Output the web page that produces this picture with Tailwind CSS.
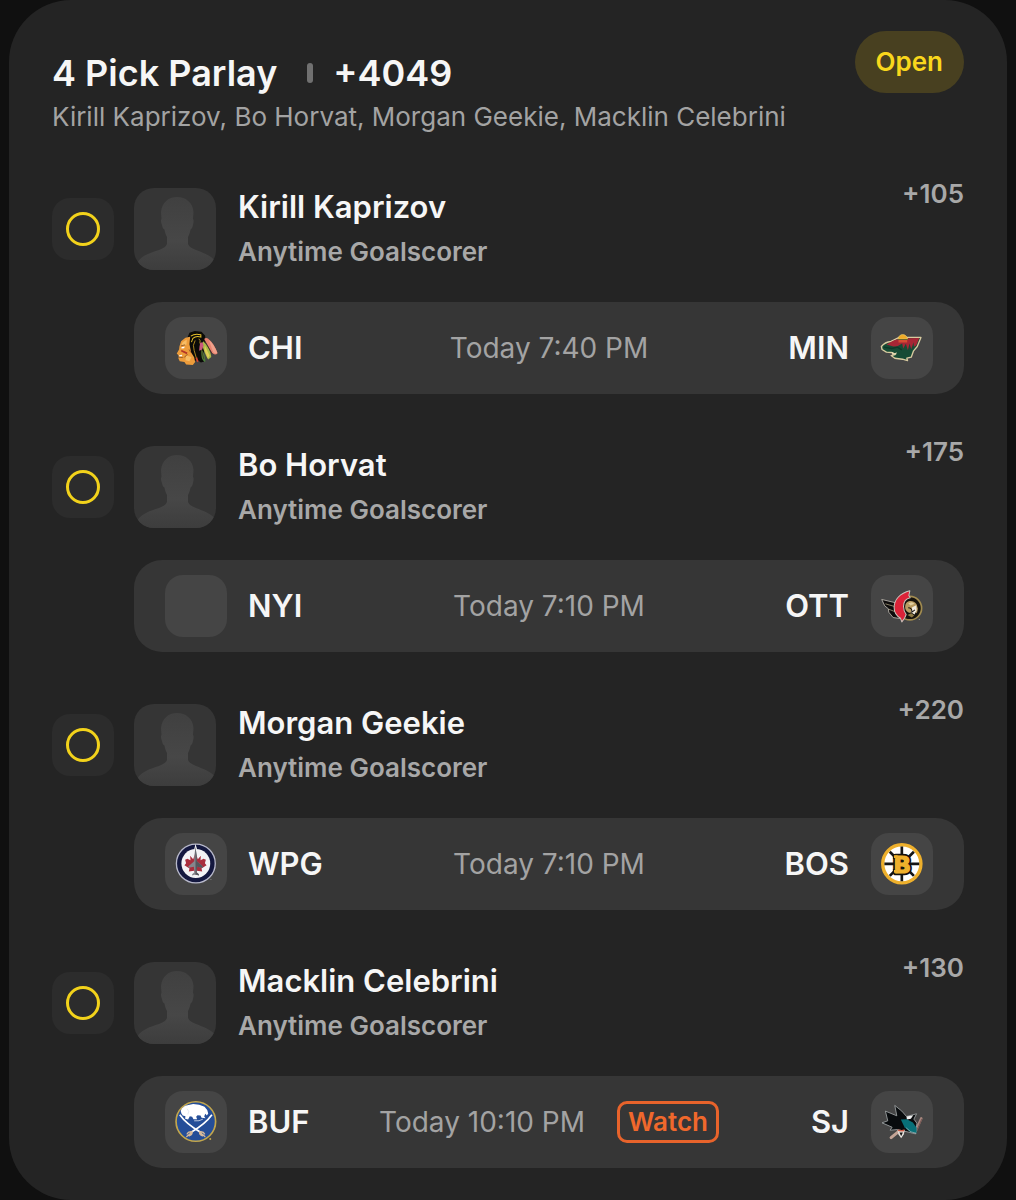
<!DOCTYPE html>
<html lang="en">
<head>
    <meta charset="UTF-8">
    <meta name="viewport" content="width=device-width, initial-scale=1.0">
    <title>4 Pick Parlay</title>
    <script src="https://cdn.jsdelivr.net/npm/@tailwindcss/browser@4"></script>
</head>
<body class="bg-[#101010] font-['Inter',sans-serif] text-[#f6f6f6]">
    <!-- shared shapes -->
    <svg class="absolute size-0" aria-hidden="true">
        <defs>
            <linearGradient id="avatarFill" x1="0" y1="0" x2="0" y2="1">
                <stop offset="0" stop-color="#404040"/>
                <stop offset="0.6" stop-color="#474747"/>
                <stop offset="1" stop-color="#3d3d3d"/>
            </linearGradient>
        </defs>
        <symbol id="avatar" viewBox="0 0 82 82">
            <path fill="url(#avatarFill)" d="M43 9c-9 0-15 6-16 15l.5 7c-1 1-.5 4 .5 6 .5 3 1.500 4 2.500 4.500C31 45 32 47 33 49v7c-1 3-4 4-8 6C16 65 8 67 3 75v7h79v-8c-5-7-13-9-20-12-4-2-7-3-8-6v-7c1-2 2-4 2.500-7.500 1-.5 2-2 2.500-4.500.5-2 1-5 0-6l.5-7C59 15 52 9 43 9z"/>
        </symbol>
    </svg>

    <main class="mx-[9px] rounded-[62px] bg-[#242424] px-[43px] pt-[31px] pb-8">
        <header class="flex items-start justify-between">
            <div class="pt-5">
                <h1 class="flex items-center text-4xl leading-[44px] font-semibold">
                    4 Pick Parlay
                    <span class="mr-5 ml-[30px] h-5 w-[6px] rounded-sm bg-[#707070]"></span>
                    +4049
                </h1>
                <p class="text-[26px] leading-[44px] text-[#a3a3a3]">Kirill Kaprizov, Bo Horvat, Morgan Geekie, Macklin Celebrini</p>
            </div>
            <span class="rounded-full bg-[#484020] px-[21px] text-[26px] leading-[62px] font-semibold text-[#f9d71c]">Open</span>
        </header>

        <ul class="mt-[39px] flex flex-col gap-[42px]">
            <li>
                <div class="flex items-start">
                    <div class="flex flex-1 items-center pt-[10px]">
                        <span class="grid size-[62px] place-items-center rounded-[18px] bg-[#2c2c2c]" role="img" aria-label="Pending">
                            <span class="size-[34px] rounded-full border-3 border-[#f2d21b]"></span>
                        </span>
                        <svg class="ml-5 size-[82px] rounded-[20px] bg-[#353535]" aria-hidden="true"><use href="#avatar"/></svg>
                        <div class="ml-[22px] flex flex-col gap-[9px]">
                            <h2 class="text-[31px] leading-9 font-semibold">Kirill Kaprizov</h2>
                            <p class="text-[26px] leading-9 font-semibold text-[#a8a8a8]">Anytime Goalscorer</p>
                        </div>
                    </div>
                    <span class="text-[26px] leading-8 font-semibold text-[#a8a8a8]">+105</span>
                </div>
                <div class="mt-8 ml-[82px] flex h-[92px] items-center rounded-[28px] bg-[#363636] px-[31px]">
                    <div class="flex flex-1 items-center gap-[21px]">
                        <svg class="size-[62px] rounded-[18px] bg-[#454545]" viewBox="15 21 185 185" aria-hidden="true">
                            <path fill="#0b0b08" d="M82 82l6-14 16-5 20 2 11 12 0 24-6 36 3 17-10 3-10-8-12 4-10-28z"/>
                            <path fill="#ed9c3b" d="M90 80l-14 3-13 10-5 16-1 9-7 12 5 5 1 5-1 5 4 8 14 2 5 8 20 1 7-9-3-14-9-14-5-25z"/>
                            <path fill="#f7bd66" d="M80 88l-13 9-3 10 15-3zM78 136l16 4-6 13-12-3z"/>
                            <path fill="#fff" d="M64 111l10-2-2 5-8 1zM57 135l9-1v4l-8 1z"/>
                            <path fill="#b53627" d="M64 119l18 8-2 5-17-8z"/>
                            <path fill="none" stroke="#6b3b1a" stroke-width="2" d="M63 107l12-3M82 132l-10 10M57 141l11 1M87 118l5 9"/>
                            <path fill="none" stroke="#e7c12c" stroke-width="3" d="M92 78q12-9 30-4l0 7q-14-5-24 4l-4 11"/>
                            <path fill="none" stroke="#c79a24" stroke-width="2.500" d="M105 91q-9 14-3 30l7 24M116 86q6 4 3 14"/>
                            <path fill="#e8826f" d="M132 87c3-4 8-4 12-1 12 9 21 24 28 43-6 6-13 4-18-3z"/>
                            <path fill="#f0a18b" d="M146 90c11 9 20 24 25 38-5 4-10 2-13-3z"/>
                            <path fill="#a9bb46" d="M129 93c12 10 23 33 24 47l-9 8c-8-12-15-32-19-46z"/>
                            <path fill="#e0cd58" d="M134 106l14 30-5 9-10-24z"/>
                            <path fill="#4b813b" d="M122 116c9 9 14 26 13 40-6-3-10-10-11-19z"/>
                            <path fill="#c9587b" d="M120 98l7-2 3 10-4 12-9 4 1-13z"/>
                            <path fill="none" stroke="#49251b" stroke-width="2" d="M131 89l25 42M124 120l7 27"/>
                            <path fill="#d5442f" d="M106 144l5-3 4 12-4 3z"/>
                        </svg>
                        <span class="text-[31px] leading-9 font-semibold">CHI</span>
                    </div>
                    <time class="text-[28px] leading-9 text-[#a3a3a3]">Today 7:40 PM</time>
                    <div class="flex flex-1 items-center justify-end gap-[22px]">
                        <span class="text-[31px] leading-9 font-semibold">MIN</span>
                        <svg class="size-[62px] rounded-[18px] bg-[#454545]" viewBox="275 21 185 185" aria-hidden="true">
                            <path fill="#174b35" stroke="#d8cba0" stroke-width="4" stroke-linejoin="round" d="M306 109c7-9 17-14 29-15l24-12 65 0-11 27-11 13-7 19-13 3 2 7-15-4-23-3-11-8 12-3-11-6-15-1-13-8z"/>
                            <path fill="#a72635" d="M321 103l20-11 18-7 60-1-9 22-7 4-1-14-7 21-5-17-5 20-6-19-8 14-3-15-14 8-12 1z"/>
                            <path fill="none" stroke="#0e3929" stroke-width="4" d="M313 111l24 4 17-4 13 8"/>
                            <path fill="#e3d8b1" d="M337 125l9 4 6-3-2 7-12 1z"/>
                            <path fill="#d64c32" d="M357 90h26v7h-26z"/>
                            <path fill="#efaa27" stroke="#e7ca6f" stroke-width="2" d="M356 87c1-18 26-18 28 0z"/>
                            <path fill="none" stroke="#6b632b" stroke-width="3" d="M355 88h30"/>
                        </svg>
                    </div>
                </div>
            </li>

            <li>
                <div class="flex items-start">
                    <div class="flex flex-1 items-center pt-[10px]">
                        <span class="grid size-[62px] place-items-center rounded-[18px] bg-[#2c2c2c]" role="img" aria-label="Pending">
                            <span class="size-[34px] rounded-full border-3 border-[#f2d21b]"></span>
                        </span>
                        <svg class="ml-5 size-[82px] rounded-[20px] bg-[#353535]" aria-hidden="true"><use href="#avatar"/></svg>
                        <div class="ml-[22px] flex flex-col gap-[9px]">
                            <h2 class="text-[31px] leading-9 font-semibold">Bo Horvat</h2>
                            <p class="text-[26px] leading-9 font-semibold text-[#a8a8a8]">Anytime Goalscorer</p>
                        </div>
                    </div>
                    <span class="text-[26px] leading-8 font-semibold text-[#a8a8a8]">+175</span>
                </div>
                <div class="mt-8 ml-[82px] flex h-[92px] items-center rounded-[28px] bg-[#363636] px-[31px]">
                    <div class="flex flex-1 items-center gap-[21px]">
                        <span class="size-[62px] rounded-[18px] bg-[#454545]"></span>
                        <span class="text-[31px] leading-9 font-semibold">NYI</span>
                    </div>
                    <time class="text-[28px] leading-9 text-[#a3a3a3]">Today 7:10 PM</time>
                    <div class="flex flex-1 items-center justify-end gap-[22px]">
                        <span class="text-[31px] leading-9 font-semibold">OTT</span>
                        <svg class="size-[62px] rounded-[18px] bg-[#454545]" viewBox="35 15 185 185" aria-hidden="true">
                            <circle cx="151" cy="114" r="35" fill="#17130d" stroke="#a18b50" stroke-width="5"/>
                            <path fill="#0d0b0b" stroke="#bdb8b0" stroke-width="2.500" stroke-linejoin="round" d="M67 88l42 10 2 32 12 15-22-3-13-16-1-10-11-9z"/>
                            <path fill="none" stroke="#c6b891" stroke-width="2" d="M78 101l27 8M88 117l20 8"/>
                            <path fill="#dc2338" stroke="#cbc5bd" stroke-width="3" stroke-linejoin="round" d="M151 62l-3 14 4 7c-14 3-20 13-20 26 0 10 3 17 8 24l-5 11-8 11-4-11c-12-7-19-18-19-32 0-24 18-43 47-50z"/>
                            <path fill="#b99c61" d="M137 108c1-17 23-21 34-6l4 14-3 13-13-11-6 10c-11-1-17-10-16-20z"/>
                            <path fill="#e0cea1" d="M146 99l11-3 8 5-12 5z"/>
                            <path fill="#f1ebe0" d="M158 111l12-6 1 16-6 12-11-7z"/>
                            <path fill="none" stroke="#1c1511" stroke-width="3" d="M146 113q12 0 11 13l9-7"/>
                            <path fill="#8e7a45" d="M144 134l11-5 9 7-7 6z"/>
                            <circle cx="179" cy="148" r="1.500" fill="#aaa"/>
                        </svg>
                    </div>
                </div>
            </li>

            <li>
                <div class="flex items-start">
                    <div class="flex flex-1 items-center pt-[10px]">
                        <span class="grid size-[62px] place-items-center rounded-[18px] bg-[#2c2c2c]" role="img" aria-label="Pending">
                            <span class="size-[34px] rounded-full border-3 border-[#f2d21b]"></span>
                        </span>
                        <svg class="ml-5 size-[82px] rounded-[20px] bg-[#353535]" aria-hidden="true"><use href="#avatar"/></svg>
                        <div class="ml-[22px] flex flex-col gap-[9px]">
                            <h2 class="text-[31px] leading-9 font-semibold">Morgan Geekie</h2>
                            <p class="text-[26px] leading-9 font-semibold text-[#a8a8a8]">Anytime Goalscorer</p>
                        </div>
                    </div>
                    <span class="text-[26px] leading-8 font-semibold text-[#a8a8a8]">+220</span>
                </div>
                <div class="mt-8 ml-[82px] flex h-[92px] items-center rounded-[28px] bg-[#363636] px-[31px]">
                    <div class="flex flex-1 items-center gap-[21px]">
                        <svg class="size-[62px] rounded-[18px] bg-[#454545]" viewBox="17 23 185 185" aria-hidden="true">
                            <circle cx="109" cy="114" r="58" fill="#14183f" stroke="#b7b8ca" stroke-width="4"/>
                            <circle cx="109" cy="114" r="43" fill="#f3f3f5"/>
                            <path fill="#f3f3f5" d="M104 72l4-17 5 17z"/>
                            <path fill="#a92e3d" d="M108 82l7 19 9-10-1 13 9-4 7 3-3 10 5 6-15 10 2 9-16-2-4 13-4-13-16 2 2-9-15-10 5-6-3-10 7-3 9 4-1-13 9 10z"/>
                            <path fill="#85868c" d="M108 64l3 23 1 20 17 15v5l-16-3-2 16 7 6v4l-10-3-10 3v-4l7-6-2-16-16 3v-5l17-15 1-20z"/>
                            <path fill="#55565c" d="M108 64l3 23 1 20 17 15v5l-16-3-2 16 7 6v4l-10-3z"/>
                            <circle cx="154" cy="162" r="1.500" fill="#999"/>
                        </svg>
                        <span class="text-[31px] leading-9 font-semibold">WPG</span>
                    </div>
                    <time class="text-[28px] leading-9 text-[#a3a3a3]">Today 7:10 PM</time>
                    <div class="flex flex-1 items-center justify-end gap-[22px]">
                        <span class="text-[31px] leading-9 font-semibold">BOS</span>
                        <svg class="size-[62px] rounded-[18px] bg-[#454545]" viewBox="35 23 185 185" aria-hidden="true">
                            <circle cx="127" cy="115" r="57" fill="#fff" stroke="#eeb02c" stroke-width="10"/>
                            <path stroke="#151515" stroke-width="8" d="M127 63v104M75 115h104M91 79l72 72M163 79l-72 72"/>
                            <text x="128" y="141" text-anchor="middle" font-family="DejaVu Sans" font-weight="700" font-size="70" fill="#eeb02c" stroke="#15120d" stroke-width="14" stroke-linejoin="round" paint-order="stroke">B</text>
                            <path fill="#eeb02c" stroke="#15120d" stroke-width="3" d="M102 88h14v11h-14zM102 132h14v11h-14z"/>
                            <text x="128" y="141" text-anchor="middle" font-family="DejaVu Sans" font-weight="700" font-size="70" fill="#eeb02c" stroke="#eeb02c" stroke-width="3">B</text>
                        </svg>
                    </div>
                </div>
            </li>

            <li>
                <div class="flex items-start">
                    <div class="flex flex-1 items-center pt-[10px]">
                        <span class="grid size-[62px] place-items-center rounded-[18px] bg-[#2c2c2c]" role="img" aria-label="Pending">
                            <span class="size-[34px] rounded-full border-3 border-[#f2d21b]"></span>
                        </span>
                        <svg class="ml-5 size-[82px] rounded-[20px] bg-[#353535]" aria-hidden="true"><use href="#avatar"/></svg>
                        <div class="ml-[22px] flex flex-col gap-[9px]">
                            <h2 class="text-[31px] leading-9 font-semibold">Macklin Celebrini</h2>
                            <p class="text-[26px] leading-9 font-semibold text-[#a8a8a8]">Anytime Goalscorer</p>
                        </div>
                    </div>
                    <span class="text-[26px] leading-8 font-semibold text-[#a8a8a8]">+130</span>
                </div>
                <div class="mt-8 ml-[82px] flex h-[92px] items-center rounded-[28px] bg-[#363636] px-[31px]">
                    <div class="flex flex-1 items-center gap-[21px]">
                        <svg class="size-[62px] rounded-[18px] bg-[#454545]" viewBox="17 23 185 185" aria-hidden="true">
                            <circle cx="109" cy="114" r="59" fill="#254e98" stroke="#c2a64d" stroke-width="5"/>
                            <path fill="none" stroke="#fff" stroke-width="5" d="M61 94q20 28 62 52M157 94q-20 28-62 52"/>
                            <path fill="none" stroke="#d5b99b" stroke-width="4" stroke-linecap="round" d="M98 145l-16 14M98 145q-12-2-15 6M120 145l16 14M120 145q12-2 15 6M98 146q0 8-9 11M120 146q0 8 9 11"/>
                            <path fill="#fff" d="M64 83l3-8 10-8 14-3 10-2 18 2 16 6 8 10 3 10-4 6-5-5-3 8 4 5-12-1-3-7-9-1-4 5 3 7-11 0-4-7-7-2-5 10-9-2 1-8-8-2-4-6z"/>
                            <path fill="none" stroke="#fff" stroke-width="2" d="M104 112q16 2 26-5"/>
                            <path fill="none" stroke="#c5d0e2" stroke-width="1.500" d="M83 76l5 8-3 9"/>
                            <circle cx="152" cy="166" r="3" fill="#c2a64d"/>
                        </svg>
                        <span class="text-[31px] leading-9 font-semibold">BUF</span>
                    </div>
                    <div class="flex items-center gap-8">
                        <time class="text-[28px] leading-9 text-[#a3a3a3]">Today 10:10 PM</time>
                        <button type="button" class="rounded-[10px] border-3 border-[#e8632b] px-2 text-[26px] leading-9 font-semibold text-[#f0682c]">Watch</button>
                    </div>
                    <div class="flex flex-1 items-center justify-end gap-[22px]">
                        <span class="text-[31px] leading-9 font-semibold">SJ</span>
                        <svg class="size-[62px] rounded-[18px] bg-[#454545]" viewBox="35 23 185 185" aria-hidden="true">
                            <path fill="none" stroke="#a5857d" stroke-width="8" stroke-linecap="round" d="M185 105l-16 36"/>
                            <path fill="none" stroke="#5d3c3a" stroke-width="2" d="M187 106l-16 36"/>
                            <path fill="none" stroke="#c3a496" stroke-width="9" stroke-linecap="round" d="M117 144l-22 18"/>
                            <path fill="#080b0d" stroke="#a2a6a8" stroke-width="2.500" stroke-linejoin="round" d="M106 66l21 17 14 16 30-8-8 16 9 12-4 32-20-5-34-8-22 2 6-9-30-13 17-6-7-29 34 14z"/>
                            <path fill="#f0f0f0" d="M141 99l20-4-7 11-12 2z"/>
                            <path fill="#087078" d="M124 108l18-1 18 10 11 16 0 16-19-4-17-14z"/>
                            <path fill="none" stroke="#b8c9ca" stroke-width="2" d="M140 133l14 12 16 4"/>
                            <path fill="#e7e2dd" d="M114 139l22 1-3 12-8 12-8-11z"/>
                            <path fill="#cd5a45" d="M114 138l13 1 9-2-4 7-15-1z"/>
                            <path fill="#171717" d="M120 147l10 0-5 11z"/>
                        </svg>
                    </div>
                </div>
            </li>
        </ul>
    </main>
</body>
</html>
